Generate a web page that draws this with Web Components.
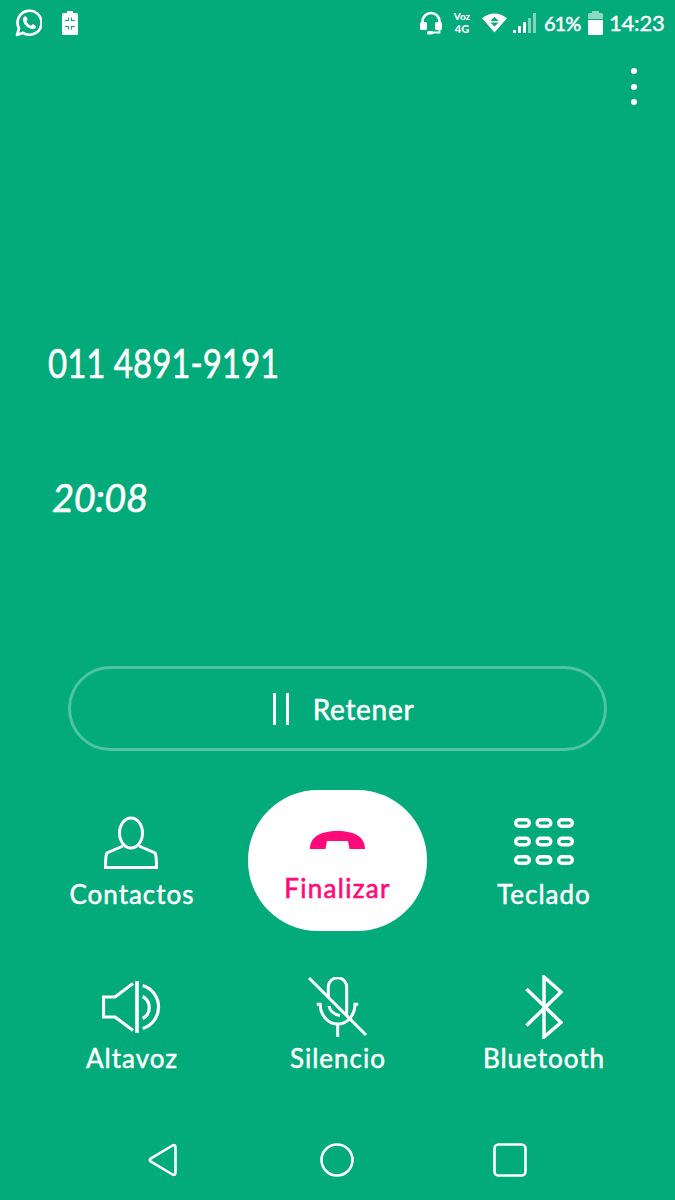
<!DOCTYPE html>
<html lang="es">
<head>
<meta charset="utf-8">
<title>Llamada</title>
<style>
  html, body { margin: 0; padding: 0; background: #02ab79; }
  body { font-family: "Lato", "Liberation Sans", sans-serif; color: #fff; }
</style>
</head>
<body>
<call-screen>
  <status-bar></status-bar>
  <overflow-menu></overflow-menu>
  <call-info number="011 4891-9191" timer="20:08"></call-info>
  <hold-button>Retener</hold-button>
  <call-actions>
    <call-action label="Contactos">
      <svg style="margin-right:2px" width="54" height="54" viewBox="0 0 54 54" fill="none" stroke="#fff" stroke-width="3">
        <ellipse cx="27" cy="17" rx="11.500" ry="15"/>
        <path d="M19 30 3 37Q1.500 39 1.500 51.500H52.500Q52.500 39 51 37L35 30"/>
      </svg>
    </call-action>
    <end-call-button>Finalizar</end-call-button>
    <call-action label="Teclado">
      <svg style="margin-top:-4px" width="60" height="47" viewBox="0 0 60 47" fill="none" stroke="#fff" stroke-width="3.400">
        <rect x="1.700" y="1.700" width="13.600" height="6.600" rx="3.300"/><rect x="23.200" y="1.700" width="13.600" height="6.600" rx="3.300"/><rect x="44.700" y="1.700" width="13.600" height="6.600" rx="3.300"/>
        <rect x="1.700" y="20.200" width="13.600" height="6.600" rx="3.300"/><rect x="23.200" y="20.200" width="13.600" height="6.600" rx="3.300"/><rect x="44.700" y="20.200" width="13.600" height="6.600" rx="3.300"/>
        <rect x="1.700" y="38.700" width="13.600" height="6.600" rx="3.300"/><rect x="23.200" y="38.700" width="13.600" height="6.600" rx="3.300"/><rect x="44.700" y="38.700" width="13.600" height="6.600" rx="3.300"/>
      </svg>
    </call-action>
    <call-action label="Altavoz">
      <svg width="60" height="52" viewBox="0 0 60 52" fill="none" stroke="#fff" stroke-width="3.200">
        <path d="M31 2.500 13 16H1.500V36H13L31 49.500"/>
        <path d="M35 0V52" stroke-width="3.600"/>
        <path d="M40.700 15.500A12.500 12.500 0 0 1 40.700 37.500"/>
        <path d="M40.700 4.500A22.500 22.500 0 0 1 40.700 47.500"/>
      </svg>
    </call-action>
    <call-action label="Silencio">
      <svg width="60" height="60" viewBox="0 0 60 60" fill="none" stroke="#fff" stroke-width="3">
        <path d="M1 1 58 58"/>
        <path d="M20.300 20V10A9.200 9.200 0 0 1 38.700 10V38"/>
        <path d="M8.700 27.300H12.200C12.200 38 20 47 29.700 47C39.400 47 47 38 47 27.300H50.300"/>
        <path d="M21 29C22 34 26 37.500 32 38.500"/>
        <path d="M29.700 47V60"/>
      </svg>
    </call-action>
    <call-action label="Bluetooth">
      <svg width="38" height="64" viewBox="0 0 38 64" fill="none" stroke="#fff" stroke-width="3.500">
        <path d="M1.500 14 36 47.500 19 62V2L36 17 1.500 50.500"/>
      </svg>
    </call-action>
  </call-actions>
  <nav-bar></nav-bar>
</call-screen>

<script>
class CallScreen extends HTMLElement {
    constructor() {
        super();
        this.attachShadow({ mode: "open" }).innerHTML = `
        <style>
            :host {
                display: flex;
                flex-direction: column;
                width: 675px;
                height: 1200px;
                background: #02ab79;
                color: #fff;
                overflow: hidden;
            }
        </style>
        <slot></slot>`;
    }
}

class StatusBar extends HTMLElement {
    constructor() {
        super();
        this.attachShadow({ mode: "open" }).innerHTML = `
        <style>
            :host {
                display: flex;
                justify-content: space-between;
                align-items: center;
                height: 45px;
                flex: none;
                padding: 0 11px 0 15px;
                font-family: "Lato", "Liberation Sans", sans-serif;
                font-weight: 700;
            }
            .group { display: flex; align-items: center; }
            .left { gap: 20px; }
            svg { display: block; flex: none; }
            .net {
                display: flex;
                flex-direction: column;
                align-items: center;
                width: 20px;
                margin-left: 10px;
                font-size: 11px;
                line-height: normal;
            }
            .net b:first-child { font-size: 10px; }
            .pct { width: 35px; margin-left: 7px; font-size: 20px; font-weight: 400; letter-spacing: -1px; -webkit-text-stroke: .5px #fff; white-space: nowrap; }
            .time { width: 55px; margin-left: 6px; font-size: 22px; font-weight: 400; letter-spacing: -.2px; -webkit-text-stroke: .4px #fff; white-space: nowrap; }
        </style>
        <div class="group left">
            <svg width="27" height="28" viewBox="0 0 27 28" fill="none">
                <path d="M2 26 4 19.500A12 12 0 1 1 8 23.800Z" stroke="#fff" stroke-width="2.600" stroke-linejoin="round"/>
                <path d="M9.500 7.500 11 7.200 12.800 10.500 11.500 12.300C12.500 14.500 14 15.800 16 16.700L17.800 15 21 17 20.600 18.800C19 20.800 16.500 20.600 13.500 18.800 10.500 17 8.300 14 8 11.200 7.800 9.500 8.500 8.300 9.500 7.500Z" fill="#fff"/>
            </svg>
            <svg width="16" height="24" viewBox="0 0 16 24">
                <path fill="#fff" fill-rule="evenodd" d="M5 0H11V2H14.500Q16 2 16 3.500V22.500Q16 24 14.500 24H1.500Q0 24 0 22.500V3.500Q0 2 1.500 2H5ZM3 10H7V6.500H6V9H3ZM13 10H9V6.500H10V9H13ZM3 15H7V18.500H6V16H3ZM13 15H9V18.500H10V16H13Z"/>
            </svg>
        </div>
        <div class="group">
            <svg width="22" height="24" viewBox="0 0 22 24" fill="none">
                <path d="M2.500 13V10.500A8.500 8.500 0 0 1 19.500 10.500V13" stroke="#fff" stroke-width="2.600"/>
                <rect x="0" y="11" width="7" height="8" rx="1.500" fill="#fff"/>
                <rect x="15" y="11" width="7" height="8" rx="1.500" fill="#fff"/>
                <path d="M19.500 18V21.500H9" stroke="#fff" stroke-width="1.800"/>
                <rect x="7" y="20" width="6" height="3.500" rx="1.500" fill="#fff"/>
            </svg>
            <div class="net"><b>Voz</b><b>4G</b></div>
            <svg width="25" height="20" viewBox="0 0 26 20" style="margin-left:10px">
                <path fill="#fff" fill-rule="evenodd" d="M0 5Q6 0 13 0T26 5L13 20ZM13 3.500 8.800 7.800H17.200ZM8.800 9.400 13 13.700 17.200 9.400Z"/>
            </svg>
            <svg width="24" height="22" viewBox="0 0 24 22" style="margin-left:6px">
                <rect x="0" y="18" width="3" height="3" fill="#fff"/>
                <rect x="5" y="14" width="3" height="7" fill="#fff"/>
                <rect x="10" y="10" width="3" height="11" fill="#fff"/>
                <rect x="15" y="6" width="3" height="15" fill="#fff" opacity=".5"/>
                <rect x="20" y="1" width="3" height="20" fill="#fff" opacity=".5"/>
            </svg>
            <span class="pct">61%</span>
            <svg width="15" height="24" viewBox="0 0 15 24" style="margin-left:9px">
                <path fill="#fff" opacity=".55" d="M4 0H11V2H13.500Q15 2 15 3.500V8H0V3.500Q0 2 1.500 2H4Z"/>
                <path fill="#fff" d="M0 9H15V22.500Q15 24 13.500 24H1.500Q0 24 0 22.500Z"/>
            </svg>
            <span class="time">14:23</span>
        </div>`;
    }
}

class OverflowMenu extends HTMLElement {
    constructor() {
        super();
        this.attachShadow({ mode: "open" }).innerHTML = `
        <style>
            :host {
                display: flex;
                flex-direction: column;
                align-items: flex-end;
                gap: 9.500px;
                height: 85px;
                box-sizing: border-box;
                flex: none;
                padding: 23px 38px 0 0;
            }
            i { width: 6px; height: 6px; border-radius: 50%; background: #fff; }
        </style>
        <i></i><i></i><i></i>`;
    }
}

class CallInfo extends HTMLElement {
    connectedCallback() {
        this.attachShadow({ mode: "open" }).innerHTML = `
        <style>
            :host {
                display: block;
                flex: none;
                height: 536px;
                box-sizing: border-box;
                padding: 213px 0 0 48px;
            }
            div { white-space: nowrap; -webkit-text-stroke: .6px #fff; }
            .number {
                font-size: 40px;
                line-height: 40px;
                transform: scaleX(.825);
                transform-origin: left center;
            }
            .timer {
                margin: 94px 0 0 4px;
                font-size: 38px;
                line-height: 40px;
                font-style: italic;
                letter-spacing: -.400px;
            }
        </style>
        <div class="number">${this.getAttribute("number")}</div>
        <div class="timer">${this.getAttribute("timer")}</div>`;
    }
}

class HoldButton extends HTMLElement {
    constructor() {
        super();
        this.attachShadow({ mode: "open" }).innerHTML = `
        <style>
            :host {
                display: flex;
                justify-content: center;
                align-items: center;
                flex: none;
                box-sizing: border-box;
                width: 539px;
                height: 85px;
                margin-left: 68px;
                padding-left: 12px;
                border: 3px solid rgba(255,255,255,.3);
                border-radius: 43px;
                font-size: 28px;
                letter-spacing: .7px;
                -webkit-text-stroke: .5px #fff;
            }
            .bars { display: flex; gap: 10px; margin-right: 24px; }
            .bars i { width: 3px; height: 32px; background: #fff; }
        </style>
        <span class="bars"><i></i><i></i></span>
        <slot></slot>`;
    }
}

class CallActions extends HTMLElement {
    constructor() {
        super();
        this.attachShadow({ mode: "open" }).innerHTML = `
        <style>
            :host {
                display: grid;
                grid-template-columns: repeat(3, 206px);
                grid-template-rows: 141px auto;
                row-gap: 23px;
                flex: none;
                margin-top: 39px;
                padding-left: 29px;
            }
        </style>
        <slot></slot>`;
    }
}

class CallAction extends HTMLElement {
    connectedCallback() {
        this.attachShadow({ mode: "open" }).innerHTML = `
        <style>
            :host {
                display: flex;
                flex-direction: column;
                align-items: center;
                padding-top: 21px;
            }
            .icon {
                display: flex;
                justify-content: center;
                align-items: center;
                height: 64px;
            }
            .label {
                margin-top: 6px;
                font-size: 26px;
                line-height: 26px;
                letter-spacing: 1px;
                white-space: nowrap;
                -webkit-text-stroke: .5px #fff;
            }
        </style>
        <div class="icon"><slot></slot></div>
        <div class="label">${this.getAttribute("label")}</div>`;
    }
}

class EndCallButton extends HTMLElement {
    constructor() {
        super();
        this.attachShadow({ mode: "open" }).innerHTML = `
        <style>
            :host {
                display: flex;
                flex-direction: column;
                align-items: center;
                justify-self: center;
                box-sizing: border-box;
                width: 179px;
                height: 141px;
                margin-left: -1px;
                padding-top: 41px;
                background: #fff;
                border-radius: 70px;
                color: #ff0a78;
            }
            svg { display: block; }
            .label {
                margin-top: 26px;
                font-size: 26px;
                line-height: 26px;
                letter-spacing: 1.300px;
                -webkit-text-stroke: .6px #ff0a78;
            }
        </style>
        <svg width="55" height="18" viewBox="0 0 55 18">
            <path fill="#ff0a78" d="M0 18C0 6 10 0 27.500 0S55 6 55 18H39.500L38 10H17L15.500 18Z"/>
        </svg>
        <div class="label"><slot></slot></div>`;
    }
}

class NavBar extends HTMLElement {
    constructor() {
        super();
        this.attachShadow({ mode: "open" }).innerHTML = `
        <style>
            :host {
                display: grid;
                grid-template-columns: repeat(3, 173px);
                justify-content: center;
                justify-items: center;
                align-items: center;
                flex: none;
                height: 80px;
                margin-top: auto;
                padding-right: 1px;
            }
            svg { display: block; }
        </style>
        <svg width="30" height="34" viewBox="0 0 30 34" fill="none" stroke="#fff" stroke-width="2.600" stroke-linejoin="round" style="margin-right:2px">
            <path d="M3 15.300 24.500 2.500Q27.500 1.300 27.500 4.500V29.500Q27.500 32.700 24.500 31.500L3 18.700Q.500 17 3 15.300Z"/>
        </svg>
        <svg width="34" height="34" viewBox="0 0 34 34" fill="none" stroke="#fff" stroke-width="2.600">
            <circle cx="17" cy="17" r="15.500"/>
        </svg>
        <svg width="34" height="34" viewBox="0 0 34 34" fill="none" stroke="#fff" stroke-width="2.600">
            <rect x="1.500" y="1.500" width="31" height="31" rx="4"/>
        </svg>`;
    }
}

customElements.define("call-screen", CallScreen);
customElements.define("status-bar", StatusBar);
customElements.define("overflow-menu", OverflowMenu);
customElements.define("call-info", CallInfo);
customElements.define("hold-button", HoldButton);
customElements.define("call-actions", CallActions);
customElements.define("call-action", CallAction);
customElements.define("end-call-button", EndCallButton);
customElements.define("nav-bar", NavBar);
</script>
</body>
</html>
